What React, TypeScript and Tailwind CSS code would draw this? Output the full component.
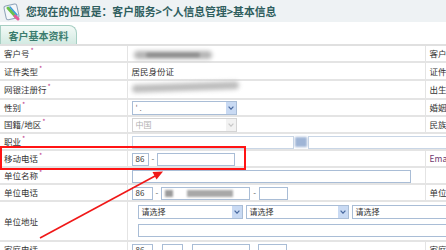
import React from "react";

const font = { fontFamily: '"Noto Sans CJK SC", "Liberation Sans", sans-serif' };

function Star() {
  return <span className="ml-[1px] align-top text-[7px] leading-none text-[#c0408a]">*</span>;
}

function Box({ className = "", children }: { className?: string; children?: React.ReactNode }) {
  return (
    <span
      className={`inline-flex h-[13px] items-center overflow-hidden border border-[#a9bdd6] bg-white pl-[3px] align-middle text-[8px] text-[#333] ${className}`}
    >
      {children}
    </span>
  );
}

function Dash() {
  return <span className="mx-[3px] inline-block align-middle text-[8px] leading-none text-[#555]">-</span>;
}

function Select({
  className = "",
  text,
  disabled,
}: {
  className?: string;
  text?: React.ReactNode;
  disabled?: boolean;
}) {
  return (
    <span
      className={`inline-flex h-[14px] items-stretch overflow-hidden border align-middle text-[8px] ${
        disabled ? "border-[#d4d4d4] text-[#b0b0b0]" : "border-[#a9bdd6] text-[#333]"
      } bg-white ${className}`}
    >
      <span className="flex flex-1 items-center pl-[3px]">{text}</span>
      <span
        className={`flex w-[10px] items-center justify-center ${
          disabled ? "bg-[#f2f2f2]" : "bg-[#c9daf3]"
        }`}
      >
        <svg width="6" height="4" viewBox="0 0 6 4">
          <path
            d="M0.6 0.6 L3 3.2 L5.4 0.6"
            fill="none"
            stroke={disabled ? "#c8c8c8" : "#4a6aa0"}
            strokeWidth="1.2"
          />
        </svg>
      </span>
    </span>
  );
}

function Label({ children, star = true }: { children: React.ReactNode; star?: boolean }) {
  return (
    <td className="border-r border-b-2 border-[#e4e4e4] pl-[4px] text-[8.5px] text-[#333]">
      {children}
      {star && <Star />}
    </td>
  );
}

function Side({ children }: { children?: React.ReactNode }) {
  return (
    <td className="border-l border-b-2 border-[#e4e4e4] pl-[4px] text-[8.5px] whitespace-nowrap text-[#333]">
      {children}
    </td>
  );
}

function Val({ children, span }: { children?: React.ReactNode; span?: number }) {
  return (
    <td colSpan={span} className="border-b-2 border-[#e4e4e4] pl-[4px] whitespace-nowrap text-[8.5px] text-[#333]">
      {children}
    </td>
  );
}

export default function App() {
  return (
    <div className="relative h-[250px] w-[446px] overflow-hidden bg-white" style={font}>
      <div className="flex h-[22px] items-center bg-[#eef2f4] pl-[3px]">
        <svg width="19" height="19" viewBox="0 0 19 19">
          <rect x="2" y="3" width="13" height="14" rx="2" transform="rotate(-12 8 10)" fill="#f4f7fa" stroke="#8ea2b8" />
          <path d="M5 6 L13 15" stroke="#6cc04a" strokeWidth="3" strokeLinecap="round" />
          <path d="M7 5 L14 13" stroke="#3e9ad8" strokeWidth="1.6" strokeLinecap="round" />
          <path d="M12 14 L15 17" stroke="#e8589a" strokeWidth="3" strokeLinecap="round" />
        </svg>
        <span className="ml-[4px] text-[10.8px] font-bold text-[#2f5e5e]">
          您现在的位置是：客户服务&gt;个人信息管理&gt;基本信息
        </span>
      </div>

      <div className="mt-[3px] flex h-[19px] items-end">
        <div className="flex h-[19px] w-[77px] items-center justify-center rounded-tr-[8px] border border-b-0 border-[#a7cfc3] bg-gradient-to-b from-[#f3faf7] to-[#d3eae2] text-[10px] font-bold text-[#3b7c6e]">
          客户基本资料
        </div>
      </div>

      <table className="w-[446px] table-fixed border-collapse border-t-2 border-[#e0e0e0]">
        <colgroup>
          <col className="w-[127px]" />
          <col className="w-[298px]" />
          <col className="w-[21px]" />
        </colgroup>
        <tbody>
          <tr className="h-[17px]">
            <Label>客户号</Label>
            <Val>
              <span className="relative inline-block h-[10px] w-[82px] align-middle">
                <span className="absolute inset-x-[2px] inset-y-[1px] rounded-full bg-[#b4b4b4] blur-[2px]" />
                <span className="absolute inset-x-[14px] inset-y-[3px] rounded-full bg-[#8c8c8c] blur-[1.5px]" />
              </span>
            </Val>
            <Side>客户</Side>
          </tr>
          <tr className="h-[18px]">
            <Label>证件类型</Label>
            <Val>居民身份证</Val>
            <Side>证件</Side>
          </tr>
          <tr className="h-[19px]">
            <Label>网银注册行</Label>
            <Val>
              <span className="relative -ml-[4px] inline-block h-[12px] w-[115px] align-top">
                <span className="absolute inset-x-[4px] top-0 h-[8px] -rotate-[2deg] rounded-full bg-[#bdbdbd] blur-[2px]" />
              </span>
            </Val>
            <Side>出生</Side>
          </tr>
          <tr className="h-[17px]">
            <Label>性别</Label>
            <Val>
              <Select className="w-[105px]" text={<span className="text-[#777]">' .</span>} />
            </Val>
            <Side>婚姻</Side>
          </tr>
          <tr className="h-[17px]">
            <Label>国籍/地区</Label>
            <Val>
              <Select className="w-[105px]" disabled text="中国" />
            </Val>
            <Side>民族</Side>
          </tr>
          <tr className="h-[17px]">
            <Label>职业</Label>
            <Val span={2}>
              <Box className="w-[162px] border-[#c9d6e6]" />
              <span className="mx-[1px] inline-block h-[10px] w-[12px] bg-[#9fb5d6] align-middle blur-[1px]" />
              <Box className="w-[140px] border-[#c9d6e6]" />
            </Val>
          </tr>
          <tr className="h-[17px]">
            <Label>移动电话</Label>
            <Val>
              <Box className="w-[17px]">86</Box>
              <Dash />
              <Box className="w-[78px]" />
            </Val>
            <Side>
              <span className="text-[#6e3a6e]">Ema</span>
            </Side>
          </tr>
          <tr className="h-[17px]">
            <Label>单位名称</Label>
            <Val>
              <Box className="w-[279px]" />
            </Val>
            <Side />
          </tr>
          <tr className="h-[17px]">
            <Label star={false}>单位电话</Label>
            <Val>
              <Box className="w-[21px]">86</Box>
              <Dash />
              <Box className="w-[89px]">
                <span className="mr-[14px] h-[7px] w-[8px] bg-[#9a9a9a] blur-[1px]" />
                <span className="h-[7px] w-[46px] bg-[#a8a8a8] blur-[1px]" />
              </Box>
              <Dash />
              <Box className="w-[29px]" />
            </Val>
            <Side>单位</Side>
          </tr>
          <tr className="h-[40px]">
            <Label star={false}>单位地址</Label>
            <Val span={2}>
              <div className="flex flex-col gap-[5px] overflow-hidden pl-[6px]">
                <div className="flex gap-[3px]">
                  <Select className="w-[105px] shrink-0" text="请选择" />
                  <Select className="w-[103px] shrink-0" text="请选择" />
                  <Select className="w-[110px] shrink-0" text="请选择" />
                </div>
                <Box className="w-[330px] shrink-0" />
              </div>
            </Val>
          </tr>
          <tr className="h-[17px]">
            <Label star={false}>家庭电话</Label>
            <Val>
              <Box className="w-[21px]">86</Box>
              <span className="inline-block w-[9px]" />
              <Box className="w-[21px]" />
              <span className="inline-block w-[9px]" />
              <Box className="w-[58px]" />
              <Dash />
              <Box className="w-[29px]" />
            </Val>
            <Side>家庭</Side>
          </tr>
        </tbody>
      </table>

      <div className="absolute left-0 top-[146px] h-[24px] w-[246px] border-[2.5px] border-[#ff1414]" />
      <svg className="absolute left-0 top-0" width="446" height="250" viewBox="0 0 446 250">
        <line x1="40" y1="238" x2="156" y2="175.5" stroke="#f01818" strokeWidth="1.6" />
        <polygon points="163,171.5 152.5,172 156.5,179.5" fill="#f01818" />
      </svg>
    </div>
  );
}
